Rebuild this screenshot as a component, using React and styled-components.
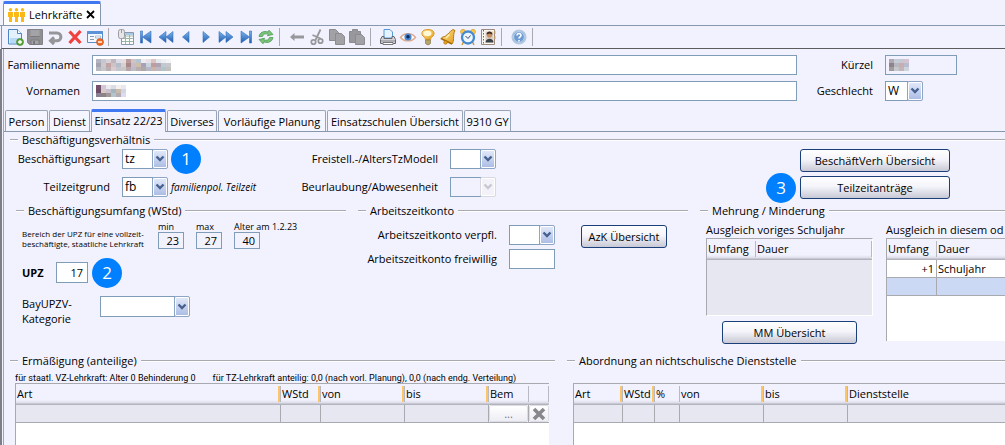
import React, { Fragment } from "react"
import styled, { createGlobalStyle, css } from "styled-components"

const GlobalStyle = createGlobalStyle`
    * {
        box-sizing: border-box;
    }
    body {
        margin: 0;
        background: #f2f2fe;
        color: #000;
        font-family: "Open Sans", "Noto Sans", sans-serif;
        font-size: 11px;
        line-height: 16px;
        overflow: hidden;
    }
    button, input, select {
        font: inherit;
        color: inherit;
        margin: 0;
    }
`

const Window = styled.div`
    display: flex;
    flex-direction: column;
    min-height: 100vh;
`

/* Fensterreiter */
const WindowTabs = styled.div`
    display: flex;
    align-items: flex-end;
    height: 26px;
    padding-left: 3px;
    border-bottom: 1px solid #8798ae;
`

const WindowTab = styled.div`
    display: flex;
    align-items: center;
    gap: 4px;
    height: 24px;
    padding: 0 5px 0 4px;
    background: #fff;
    border: 1px solid #8798ae;
    border-top: 3px solid #3f78f0;
    border-bottom: 0;
    border-radius: 2px 2px 0 0;
`

const CloseButton = styled.button`
    display: flex;
    padding: 0;
    border: 0;
    background: none;
`

/* Werkzeugleiste */
const Toolbar = styled.div`
    display: flex;
    align-items: center;
    height: 23px;
    margin-left: 1px;
    padding-left: 3px;
    border-left: 1px solid #8798ae;
    border-bottom: 1px solid #5c5c60;
`

const ToolButton = styled.button`
    display: flex;
    align-items: center;
    justify-content: center;
    width: 20px;
    height: 20px;
    padding: 0;
    border: 0;
    background: none;
`

const Separator = styled.div`
    width: 1px;
    height: 18px;
    margin: 0 7px 0 3px;
    background: #a9a9b0;
`

const Workspace = styled.main`
    display: flex;
    flex-direction: column;
    flex: 1;
    border-left: 2px solid #7e7e86;
`

const Inner = styled.div`
    display: flex;
    flex-direction: column;
    flex: 1;
    margin-left: 1px;
    border-left: 1px solid #9aa4b8;
`

const HeaderForm = styled.div`
    display: grid;
    grid-template-columns: 76px 1fr 64px 120px;
    column-gap: 12px;
    row-gap: 6px;
    padding-top: 6px;
`

const Label = styled.label`
    display: block;
    line-height: 20px;
    text-align: right;
    white-space: nowrap;
`

const Field = styled.input`
    width: ${p => p.$width || '100%'};
    height: ${p => p.$height || '20px'};
    padding: 0 4px;
    border: 1px solid #7f9db9;
    border-radius: 0;
    background: ${p => p.readOnly ? '#f2f2fe' : '#fff'};
    text-align: ${p => p.$right ? 'right' : 'left'};
    outline: 0;
`

const MaskedWrap = styled.div`
    position: relative;
    height: 20px;
    width: ${p => p.$width || 'auto'};
    svg {
        position: absolute;
        left: 4px;
        top: 4px;
    }
`

const ComboWrap = styled.div`
    position: relative;
    flex: none;
    width: ${p => p.$width || '46px'};
    height: ${p => p.$tall ? '21px' : '20px'};
`

const ComboSelect = styled.select`
    appearance: none;
    display: block;
    width: calc(100% - 15px);
    height: 100%;
    padding: 0 2px;
    border: 1px solid #7f9db9;
    border-radius: 0;
    background: #fff;
    font-size: 12px;
    opacity: 1;
    &:disabled {
        background: #f2f2fe;
    }
`

const Arrow = styled.span`
    position: absolute;
    top: 0;
    right: 0;
    display: flex;
    align-items: center;
    justify-content: center;
    width: 16px;
    height: 100%;
    border: 1px solid ${p => p.$off ? '#d8d8e0' : '#8ea6c6'};
    border-radius: 2px;
    box-shadow: inset 0 0 0 1px #fff;
    background: ${p => p.$off ? '#f2f2f8' : 'linear-gradient(#e4eafa, #a9bbe4)'};
    pointer-events: none;
`

/* Registerkarten */
const TabBar = styled.nav`
    display: flex;
    align-items: flex-end;
    height: 31px;
    padding-left: 1px;
    border-bottom: 1px solid #8798ae;
`

const Tab = styled.button`
    width: ${p => p.$width}px;
    height: 21px;
    margin-right: 1px;
    padding: 2px 0 0;
    border: 1px solid #9aa4b8;
    border-bottom: 0;
    border-radius: 2px 2px 0 0;
    background: #f5f5ff;
    white-space: nowrap;
    ${p => p.$active && css`
        height: 23px;
        margin-bottom: -1px;
        padding: 0 0 2px;
        border-top: 3px solid #3f78f0;
        background: #f2f2fe;
    `}
`

const Group = styled.fieldset`
    min-width: 0;
    margin: 0;
    padding: 0;
    border: 0 solid #a9a9b4;
    border-top-width: 2px;
    border-image: linear-gradient(#a9a9b4 1px, #fff 1px) 2 0 0 0;
`

const Legend = styled.legend`
    height: 15px;
    margin-left: 8px;
    padding: 0 4px;
    line-height: 15px;
`

const TopGroup = styled(Group)`
    margin-left: 6px;
`

const TopRow = styled.div`
    display: flex;
    align-items: flex-start;
    padding-top: 2px;
`

const Pairs = styled.div`
    display: grid;
    grid-template-columns: ${p => p.$label}px auto;
    column-gap: 12px;
    row-gap: ${p => p.$gap || 8}px;
    flex: none;
    width: ${p => p.$width};
`

const Inline = styled.div`
    display: flex;
    align-items: center;
    gap: 3px;
    height: 20px;
`

const Hint = styled.span`
    font-size: 10px;
    font-style: italic;
    white-space: nowrap;
`

const Badge = styled.span`
    display: flex;
    align-items: center;
    justify-content: center;
    flex: none;
    width: 30px;
    height: 30px;
    border-radius: 50%;
    background: #0080ff;
    color: #fff;
    font-size: 17px;
`

const ButtonColumn = styled.div`
    display: flex;
    flex-direction: column;
    align-items: flex-end;
    gap: 4px;
    margin-left: auto;
    padding-right: 55px;
`

const ButtonRow = styled.div`
    display: flex;
    align-items: center;
    gap: 4px;
    height: 23px;
`

const Button = styled.button`
    width: ${p => p.$width};
    height: 23px;
    padding: 0;
    border: 1px solid #1b3f78;
    border-radius: 3px;
    background: linear-gradient(#ffffff, #f4f4fa 45%, #c9c9d6);
    white-space: nowrap;
`

const MiddleRow = styled.div`
    display: grid;
    grid-template-columns: 330px 330px 1fr;
    column-gap: 12px;
    padding: 4px 0 9px 12px;
`

const RangeRow = styled.div`
    display: flex;
    align-items: flex-start;
    padding: 4px 0 0 6px;
`

const RangeText = styled.p`
    width: 136px;
    margin: 0;
    padding-top: 7px;
    font-size: 8px;
    line-height: 10px;
    white-space: nowrap;
`

const RangeItem = styled.label`
    display: block;
    width: 38px;
    font-size: 9px;
    line-height: 10px;
    white-space: nowrap;
    input {
        display: block;
        font-size: 11px;
    }
`

const UpzRow = styled.div`
    display: flex;
    align-items: center;
    gap: 4px;
    height: 21px;
    margin: 13px 0;
    padding-left: 6px;
`

const UpzLabel = styled.label`
    width: 30px;
    font-weight: 700;
`

const CategoryRow = styled.div`
    display: flex;
    align-items: flex-start;
    padding-left: 6px;
`

const CategoryLabel = styled.label`
    width: 78px;
    line-height: 15px;
`

const AccountRow = styled.div`
    display: flex;
    align-items: flex-start;
    justify-content: space-between;
    padding: 7px 21px 0 0;
`

const BalanceRow = styled.div`
    display: flex;
    gap: 13px;
    padding: 4px 0 0 6px;
    overflow: hidden;
`

const Balance = styled.div`
    display: flex;
    flex-direction: column;
    align-items: center;
    flex: none;
    width: ${p => p.$width};
`

const Caption = styled.div`
    align-self: flex-start;
    white-space: nowrap;
`

const TableBox = styled.div`
    width: 100%;
    height: ${p => p.$height || 'auto'};
    margin-bottom: ${p => p.$after || '0'};
    border-left: 1px solid #a9a9b0;
    border-top: 1px solid #a9a9b0;
    border-right: ${p => p.$open ? '0' : '1px solid #fff'};
    border-bottom: ${p => p.$open ? '0' : '1px solid #fff'};
    background: ${p => p.$fill || '#fff'};
    overflow: hidden;
`

const Table = styled.table`
    width: 100%;
    table-layout: fixed;
    border-collapse: separate;
    border-spacing: 0;
`

const Th = styled.th`
    height: 21px;
    padding: 2px 0 3px;
    background: linear-gradient(#f2f2fe 16px, #dcdce8 19px, #b4b4be 20px);
    font-weight: 400;
    text-align: left;
    white-space: nowrap;
`

const HeadText = styled.div`
    height: 16px;
    padding-left: 1px;
    border-right: ${p => p.$line === 'none' ? '0' : '1px solid #b9b9c4'};
    box-shadow: ${p => p.$line === 'orange' ? 'inset -2px 0 0 #fbc568' : 'none'};
    overflow: hidden;
`

const Td = styled.td`
    height: 18px;
    padding: 0 2px 0 1px;
    border-right: 1px solid #a9a9b0;
    border-bottom: 1px solid #a9a9b0;
    background: ${p => p.$fill || '#fff'};
    line-height: 17px;
    text-align: ${p => p.$right ? 'right' : 'left'};
    &:last-child {
        border-right: 0;
    }
`

const CellTd = styled(Td)`
    padding: 0;
`

const CellButton = styled.button`
    display: flex;
    align-items: center;
    justify-content: center;
    width: 100%;
    height: 17px;
    padding: 0;
    border: 1px solid #dcdce4;
    border-radius: 2px;
    background: linear-gradient(#fff, #ededf4);
    color: #6f6f78;
`

const BottomRow = styled.div`
    display: grid;
    grid-template-columns: 545px 1fr;
    column-gap: 12px;
    flex: 1;
    padding-left: 6px;
`

const BottomColumn = styled.div`
    display: flex;
    flex-direction: column;
    min-width: 0;
`

const BottomGroup = styled(Group)`
    flex: none;
`

const Notes = styled.div`
    display: flex;
    gap: 17px;
    height: 15px;
    padding-left: 5px;
    font-family: Roboto, sans-serif;
    font-size: 9px;
    line-height: 20px;
    white-space: nowrap;
`

const BottomTable = styled.div`
    display: flex;
    flex: 1;
    padding: 0 ${p => p.$right}px 0 ${p => p.$left}px;
`

/* Symbole der Werkzeugleiste, Raster 18x18 */
const Icon = ({ size = 18, children }) => (
    <svg width={size} height={size} viewBox="0 0 18 18" fill="none" aria-hidden="true">
        <defs>
            <linearGradient id="blue" x1="0" y1="0" x2="0" y2="1">
                <stop offset="0" stopColor="#7db4ee" />
                <stop offset="1" stopColor="#1f5cae" />
            </linearGradient>
            <linearGradient id="gold" x1="0" y1="0" x2="1" y2="1">
                <stop offset="0" stopColor="#ffe79a" />
                <stop offset="1" stopColor="#e39a12" />
            </linearGradient>
        </defs>
        {children}
    </svg>
)

const tri = (d) => <path d={d} fill="url(#blue)" stroke="#2f6fc0" strokeWidth=".6" />

const icons = {
    neu: <g>
        <path d="M2.5 1.5h9l4 4v10.500h-13z" fill="#e4f1fd" stroke="#4d86c4" />
        <path d="M4 10h10v5H4z" fill="#b9daf6" />
        <path d="M11.500 1.500v4h4" fill="#fff" stroke="#4d86c4" />
        <circle cx="14" cy="14" r="3.500" fill="#5fa83c" stroke="#3b7d22" strokeWidth=".6" />
        <path d="M14 12v4M12 14h4" stroke="#fff" strokeWidth="1.300" />
    </g>,
    speichern: <g>
        <path d="M1.500 1.500h15v15h-13l-2-2z" fill="#8f8f93" stroke="#848488" />
        <path d="M4.500 2h9v6h-9z" fill="#a3a3a7" />
        <path d="M4.500 8.500h9M5 12h8v4.500H5z" stroke="#7a7a7e" fill="#a3a3a7" />
        <path d="M7 13h2v3H7z" fill="#78787c" />
    </g>,
    zurueck: <path d="M3 5h8a3.900 3.900 0 0 1 0 7.800H6M8 9.200 4.500 12.800l3.500 3.400" stroke="#96969a" strokeWidth="3" />,
    loeschen: <path d="m3.500 3.500 11 11.500M14.500 3l-11 12" stroke="#f0413f" strokeWidth="3.200" />,
    formular: <g>
        <path d="M1.500 3.500h15v11h-15z" fill="#f3f8fe" stroke="#5b8dc8" />
        <path d="M1.500 3h15v3h-15z" fill="#5b93d6" />
        <path d="M4 8.500h4M4 11.500h4" stroke="#8a9ab0" />
        <path d="M9.500 8h5v2h-5z" fill="#fff" stroke="#8aa6cc" strokeWidth=".7" />
        <circle cx="14" cy="14" r="3.500" fill="#ee6a22" stroke="#c84d10" strokeWidth=".6" />
        <path d="M12 14h4" stroke="#fff" strokeWidth="1.400" />
    </g>,
    liste: <g>
        <path d="M4.500 4.500h12v12h-12z" fill="#fff" stroke="#8a9aaa" />
        <path d="M8.500 5v11M12.500 5v11M5 8h11M5 10.500h11M5 13.500h11" stroke="#9bb6a6" />
        <path d="M5 5h11v2H5z" fill="#a8c8e8" />
        <rect x="1.500" y="1.500" width="6" height="9" rx="2" fill="#e6e6ea" stroke="#9a9aa0" />
        <path d="M4.500 2v3" stroke="#9a9aa0" />
    </g>,
    erster: <g>{tri("M14 3v12L5.500 9z")}{tri("M3.500 3h2v12h-2z")}</g>,
    schnellZurueck: <g>{tri("M9 3.500v11L2 9z")}{tri("M16 3.500v11L9 9z")}</g>,
    vorheriger: tri("M12 3.500v11L5.500 9z"),
    naechster: tri("M6 3.500v11L12.500 9z"),
    schnellVor: <g>{tri("M2 3.500v11L9 9z")}{tri("M9 3.500v11L16 9z")}</g>,
    letzter: <g>{tri("M4 3v12l8.500-6z")}{tri("M12.500 3h2v12h-2z")}</g>,
    aktualisieren: <g stroke="#419447" strokeWidth=".7" fill="#7bc27b">
        <path d="M2 8.500C2.500 4.500 7 2.500 11 4l1-1.800 4 4.300-5.500 1.300.7-1.600C8.500 5.300 6 6 5.500 8.500z" />
        <path d="M16 9.500c-.5 4-5 6-9 4.500l-1 1.800-4-4.300 5.500-1.300-.7 1.600c2.700.9 5.200.2 5.700-2.300z" />
    </g>,
    pfeil: <path d="m2 9 4.500-4v2.500H16v3H6.500V13z" fill="#98989c" />,
    schere: <g stroke="#98989c" strokeWidth="1.800">
        <path d="M12.500 1.500 7.500 12M4.500 7l8 3.500" />
        <circle cx="5.500" cy="14" r="2.200" /><circle cx="12.500" cy="13" r="2.200" />
    </g>,
    kopieren: <g fill="#a2a2a6" stroke="#8c8c90">
        <path d="M1.500 1.500h6l3 3v8h-9z" /><path d="M7.500 5.500h6l3 3v8h-9z" />
    </g>,
    einfuegen: <g fill="#98989c" stroke="#8c8c90">
        <path d="M1.500 3.500h3v-2h5v2h3v11h-11z" /><path d="M7.500 6.500h6l3 3v7h-9z" fill="#a2a2a6" />
    </g>,
    drucken: <g>
        <path d="M5 1.500h6l2.500 2.500v6H5z" fill="#e6f3ff" stroke="#5599dd" />
        <path d="m3 8.500-1.500 3v4h15v-4l-1.500-3h-2v2H5v-2z" fill="#d2d2d8" stroke="#66666c" />
        <path d="M2 13h14" stroke="#88888e" /><path d="M4 14.500h10v2H4z" fill="#fff" stroke="#77777c" />
    </g>,
    auge: <g>
        <path d="M1.500 9.500C5 4.500 13 4.500 16.500 9.500 13 14 5 14 1.500 9.500z" fill="#fff" stroke="#dca98c" strokeWidth="1.400" />
        <circle cx="9" cy="9" r="3.600" fill="#4a86d0" /><circle cx="9" cy="8.700" r="1.700" fill="#102a58" />
    </g>,
    lampe: <g>
        <path d="M9 1.500c7 0 7.500 5 4 7.500-1 .8-1.300 1.600-1.300 2.500H6.300c0-.9-.3-1.700-1.300-2.500C1.500 6.500 2 1.500 9 1.500z" fill="url(#gold)" stroke="#dc9b2c" />
        <ellipse cx="8.500" cy="5.500" rx="4" ry="2.800" fill="#fff8d6" />
        <path d="M6.500 12h5v3.500l-1.500 1.200H8l-1.500-1.200z" fill="#b5a46c" stroke="#7c7040" strokeWidth=".6" />
    </g>,
    glocke: <g>
        <path d="M16 2.500c-1.500 2.500-1.300 5-1.500 8 0 2-.3 4-1.500 5.500L2 10.500c1-1.700 2.700-1.500 4.500-2.500C9 6.500 10.500 3.500 14 1.500z" fill="url(#gold)" stroke="#b77a10" />
        <path d="M2 10.500 13 16" stroke="#a96f0c" strokeWidth="1.600" />
        <path d="M10.500 6.500 7 10" stroke="#fff0b4" strokeWidth="1.400" />
        <circle cx="6.500" cy="14.500" r="1.800" fill="#e0a020" stroke="#a96f0c" strokeWidth=".6" />
    </g>,
    wecker: <g>
        <circle cx="4" cy="3.800" r="2.500" fill="#f8c74c" stroke="#cf962a" strokeWidth=".6" />
        <circle cx="14" cy="3.800" r="2.500" fill="#f8c74c" stroke="#cf962a" strokeWidth=".6" />
        <path d="m4.500 14-1.500 3M13.500 14l1.500 3" stroke="#cf962a" strokeWidth="1.500" />
        <circle cx="9" cy="9.500" r="6" fill="#edf6ff" stroke="#468ad0" strokeWidth="2.300" />
        <path d="m6.500 8 2.500 2.500 2.500-3" stroke="#3a4a66" />
    </g>,
    adressbuch: <g>
        <path d="M2.500 1.500h13v15h-13z" fill="#faf6f0" stroke="#9c8a7c" />
        <path d="M4.500 2v14" stroke="#c04a3a" strokeDasharray="1.500 1.500" />
        <path d="M6.500 3.500h8v11h-8z" fill="#d8d0c4" />
        <circle cx="10.500" cy="7" r="2.600" fill="#c98c62" /><path d="M7.500 6.500c0-4 6-4 6 0l-3-1z" fill="#402a20" />
        <path d="M6.500 14.500c0-5 8-5 8 0z" fill="#3c4048" />
        <path d="M16 3v3M16 8v3" stroke="#e0a84e" />
    </g>,
    hilfe: <g>
        <circle cx="9" cy="9" r="6.800" fill="#6d9bd3" stroke="#b4c8e2" strokeWidth="1.500" />
        <circle cx="9" cy="9" r="5.400" stroke="#dce8f6" strokeWidth=".8" />
        <path d="M7 7.500c0-2.800 4.200-2.500 4 0-.1 1.300-2 1.400-2 3M9 12v1.500" stroke="#fff" strokeWidth="1.600" />
    </g>,
}

const toolGroups = [
    [['neu', 'Neu'], ['speichern', 'Speichern'], ['zurueck', 'Rückgängig'], ['loeschen', 'Löschen'], ['formular', 'Formular']],
    [['liste', 'Liste'], ['erster', 'Erster'], ['schnellZurueck', 'Schnell zurück'], ['vorheriger', 'Vorheriger'], ['naechster', 'Nächster'], ['schnellVor', 'Schnell vor'], ['letzter', 'Letzter'], ['aktualisieren', 'Aktualisieren']],
    [['pfeil', 'Zurück'], ['schere', 'Ausschneiden'], ['kopieren', 'Kopieren'], ['einfuegen', 'Einfügen']],
    [['drucken', 'Drucken'], ['auge', 'Ansicht'], ['lampe', 'Tipp'], ['glocke', 'Erinnerung'], ['wecker', 'Wecker'], ['adressbuch', 'Adressbuch']],
    [['hilfe', 'Hilfe']],
]

const tabs = [
    ['Person', 43], ['Dienst', 41], ['Einsatz 22/23', 75], ['Diverses', 50],
    ['Vorläufige Planung', 108], ['Einsatzschulen Übersicht', 136], ['9310 GY', 47],
]

const People = () => (
    <svg width="17" height="14" viewBox="0 0 17 14" fill="#fbb917" aria-hidden="true">
        {[0, 6, 12].map(x => (
            <g key={x} transform={`translate(${x} 0)`}>
                <circle cx="2.500" cy="1.700" r="1.700" />
                <path d="M0 4h5v5H4v5H1V9H0z" />
            </g>
        ))}
    </svg>
)

/* unkenntlich gemachte Personendaten */
const Mosaic = ({ rows }) => (
    <svg width={rows[0].length * 5} height={rows.length * 4} aria-hidden="true">
        {rows.map((row, y) => row.map((c, x) => (
            <rect key={`${x}-${y}`} x={x * 5} y={y * 4} width="5" height="4" fill={c} />
        )))}
    </svg>
)

const familyMask = [
    ['#b4b4c0', '#c6c6d2', '#d6d2d8', '#c2b6be', '#dcdce8', '#e6dcdc', '#b89ca0', '#d2c4c4', '#b4c4d0', '#ececf0', '#e8e0e6', '#dcc4c4', '#e4e8ec', '#eeeef2', '#f4f4f6'],
    ['#a4a4b0', '#ccc8cc', '#c2a4a4', '#cfc3c8', '#b6bcc8', '#d6d0ce', '#a88888', '#c8bcc8', '#ccc0aa', '#a8a0b8', '#c8d4dc', '#c09c9c', '#b0a4b4', '#bccad4', '#c8c8cc'],
    ['#b8b8c0', '#c6c6ca', '#bab0b4', '#d8ccd0', '#c4c4cc', '#c8c8c6', '#b8a4a8', '#bcbcc8', '#b8aeb0', '#b0a8a4', '#b4b8c8', '#ccb4ac', '#c0b8c0', '#b0c4cc', '#c4c0bc'],
]
const firstMask = [
    ['#74506c', '#d0c8d4', '#ececf0', '#dcdce4', '#f4f0f0', '#e8e8f0'],
    ['#6c4c64', '#d8c8c8', '#c8c0cc', '#a4b4c0', '#c8bca8', '#d4d4e8'],
    ['#8c8094', '#8c8484', '#a09898', '#b4c4cc', '#b4acb0', '#dcdcf0'],
]
const shortMask = [
    ['#b0a8b0', '#c4ccd8', '#c8c8d4', '#d4c4d0'],
    ['#8c8488', '#b8b8c0', '#c8acb0', '#b8bcd0'],
    ['#a49c9c', '#c4c8cc', '#c4b4b8', '#ccd4dc'],
]

const Combo = ({ id, value = '', width, tall, disabled }) => (
    <ComboWrap $width={width} $tall={tall}>
        <ComboSelect id={id} defaultValue={value} disabled={disabled}>
            <option>{value}</option>
        </ComboSelect>
        <Arrow $off={disabled}>
            <svg width="10" height="8" viewBox="0 0 10 8" fill="none" aria-hidden="true">
                <path d="m1.500 1.500 3.500 3.500 3.500-3.500" stroke={disabled ? '#c8c8d0' : '#47628f'} strokeWidth="2.400" />
            </svg>
        </Arrow>
    </ComboWrap>
)

const Head = ({ cols }) => (
    <Fragment>
        <colgroup>
            {cols.map(([name, width], i) => <col key={i} style={width ? { width } : undefined} />)}
        </colgroup>
        <thead>
            <tr>
                {cols.map(([name, width, line], i) => (
                    <Th key={i}><HeadText $line={line}>{name}</HeadText></Th>
                ))}
            </tr>
        </thead>
    </Fragment>
)

const GREY = '#e7e7f2'
const BLUE = '#ccd9f5'

function App(){
    return (
    <Fragment>
        <GlobalStyle />
        <Window>
            <WindowTabs>
                <WindowTab>
                    <People />
                    <span>Lehrkräfte</span>
                    <CloseButton aria-label="Schließen">
                        <svg width="9" height="9" viewBox="0 0 9 9"><path d="m1 1 7 7M8 1 1 8" stroke="#000" strokeWidth="1.800" /></svg>
                    </CloseButton>
                </WindowTab>
            </WindowTabs>
            <Toolbar>
                {toolGroups.map((group, i) => (
                    <Fragment key={i}>
                        {group.map(([name, title]) => (
                            <ToolButton key={name} aria-label={title}><Icon>{icons[name]}</Icon></ToolButton>
                        ))}
                        <Separator />
                    </Fragment>
                ))}
            </Toolbar>
            <Workspace>
                <Inner>
                    <HeaderForm>
                        <Label htmlFor="familienname">Familienname</Label>
                        <MaskedWrap><Field id="familienname" /><Mosaic rows={familyMask} /></MaskedWrap>
                        <Label htmlFor="kuerzel">Kürzel</Label>
                        <MaskedWrap $width="72px"><Field id="kuerzel" readOnly /><Mosaic rows={shortMask} /></MaskedWrap>
                        <Label htmlFor="vornamen">Vornamen</Label>
                        <MaskedWrap><Field id="vornamen" /><Mosaic rows={firstMask} /></MaskedWrap>
                        <Label htmlFor="geschlecht">Geschlecht</Label>
                        <Combo id="geschlecht" value="W" width="38px" />
                    </HeaderForm>
                    <TabBar>
                        {tabs.map(([name, width]) => (
                            <Tab key={name} $width={width} $active={name === 'Einsatz 22/23'}>{name}</Tab>
                        ))}
                    </TabBar>

                    <TopGroup>
                        <Legend>Beschäftigungsverhältnis</Legend>
                        <TopRow>
                            <Pairs $label={100} $width="288px">
                                <Label htmlFor="art">Beschäftigungsart</Label>
                                <Inline><Combo id="art" value="tz" /><Badge>1</Badge></Inline>
                                <Label htmlFor="grund">Teilzeitgrund</Label>
                                <Inline><Combo id="grund" value="fb" /><Hint>familienpol. Teilzeit</Hint></Inline>
                            </Pairs>
                            <Pairs $label={140} $width="200px">
                                <Label htmlFor="modell">Freistell.-/AltersTzModell</Label>
                                <Combo id="modell" />
                                <Label htmlFor="abwesenheit">Beurlaubung/Abwesenheit</Label>
                                <Combo id="abwesenheit" disabled />
                            </Pairs>
                            <ButtonColumn>
                                <ButtonRow><Button $width="150px">BeschäftVerh Übersicht</Button></ButtonRow>
                                <ButtonRow><Badge>3</Badge><Button $width="150px">Teilzeitanträge</Button></ButtonRow>
                            </ButtonColumn>
                        </TopRow>
                    </TopGroup>

                    <MiddleRow>
                        <Group>
                            <Legend>Beschäftigungsumfang (WStd)</Legend>
                            <RangeRow>
                                <RangeText>Bereich der UPZ für eine vollzeit-<br />beschäftigte, staatliche Lehrkraft</RangeText>
                                <RangeItem>min<Field $width="26px" $height="17px" $right readOnly defaultValue="23" /></RangeItem>
                                <RangeItem>max<Field $width="26px" $height="17px" $right readOnly defaultValue="27" /></RangeItem>
                                <RangeItem>Alter am 1.2.23<Field $width="26px" $height="17px" $right readOnly defaultValue="40" /></RangeItem>
                            </RangeRow>
                            <UpzRow>
                                <UpzLabel htmlFor="upz">UPZ</UpzLabel>
                                <Field id="upz" $width="32px" $height="21px" $right defaultValue="17" />
                                <Badge>2</Badge>
                            </UpzRow>
                            <CategoryRow>
                                <CategoryLabel htmlFor="kategorie">BayUPZV-<br />Kategorie</CategoryLabel>
                                <Combo id="kategorie" width="90px" tall />
                            </CategoryRow>
                        </Group>
                        <Group>
                            <Legend>Arbeitszeitkonto</Legend>
                            <AccountRow>
                                <Pairs $label={139} $gap={4} $width="197px">
                                    <Label htmlFor="verpfl">Arbeitszeitkonto verpfl.</Label>
                                    <Combo id="verpfl" />
                                    <Label htmlFor="freiwillig">Arbeitszeitkonto freiwillig</Label>
                                    <Field id="freiwillig" $width="46px" />
                                </Pairs>
                                <Button $width="86px">AzK Übersicht</Button>
                            </AccountRow>
                        </Group>
                        <Group>
                            <Legend>Mehrung / Minderung</Legend>
                            <BalanceRow>
                                <Balance $width="167px">
                                    <Caption>Ausgleich voriges Schuljahr</Caption>
                                    <TableBox $height="78px" $after="5px" $fill={GREY}>
                                        <Table><Head cols={[['Umfang', 49, 'grey'], ['Dauer', 0, 'grey']]} /></Table>
                                    </TableBox>
                                    <Button $width="135px">MM Übersicht</Button>
                                </Balance>
                                <Balance $width="240px">
                                    <Caption>Ausgleich in diesem od</Caption>
                                    <TableBox $height="103px" $open>
                                        <Table>
                                            <Head cols={[['Umfang', 50, 'grey'], ['Dauer', 0, 'none']]} />
                                            <tbody>
                                                <tr><Td $right>+1</Td><Td>Schuljahr</Td></tr>
                                                <tr><Td $fill={BLUE} /><Td $fill={BLUE} /></tr>
                                            </tbody>
                                        </Table>
                                    </TableBox>
                                </Balance>
                            </BalanceRow>
                        </Group>
                    </MiddleRow>

                    <BottomRow>
                        <BottomColumn>
                            <BottomGroup>
                                <Legend>Ermäßigung (anteilige)</Legend>
                                <Notes>
                                    <span>für staatl. VZ-Lehrkraft: Alter 0 Behinderung 0</span>
                                    <span>für TZ-Lehrkraft anteilig: 0,0 (nach vorl. Planung), 0,0 (nach endg. Verteilung)</span>
                                </Notes>
                            </BottomGroup>
                            <BottomTable $left={5} $right={6}>
                                <TableBox $open>
                                    <Table>
                                        <Head cols={[['Art', 0, 'orange'], ['WStd', 40, 'orange'], ['von', 84, 'orange'], ['bis', 84, 'orange'], ['Bem', 40, 'grey'], ['', 20, 'grey']]} />
                                        <tbody>
                                            <tr>
                                                <Td $fill={GREY} /><Td $fill={GREY} /><Td $fill={GREY} /><Td $fill={GREY} />
                                                <CellTd><CellButton>...</CellButton></CellTd>
                                                <CellTd>
                                                    <CellButton aria-label="Zeile löschen">
                                                        <svg width="14" height="14" viewBox="0 0 14 14"><path d="m2 2 10 10M12 2 2 12" stroke="#87878c" strokeWidth="3.600" /></svg>
                                                    </CellButton>
                                                </CellTd>
                                            </tr>
                                        </tbody>
                                    </Table>
                                </TableBox>
                            </BottomTable>
                        </BottomColumn>
                        <BottomColumn>
                            <BottomGroup>
                                <Legend>Abordnung an nichtschulische Dienststelle</Legend>
                                <Notes />
                            </BottomGroup>
                            <BottomTable $left={6} $right={0}>
                                <TableBox $open>
                                    <Table>
                                        <Head cols={[['Art', 49, 'orange'], ['WStd', 32, 'orange'], ['%', 25, 'grey'], ['von', 84, 'orange'], ['bis', 84, 'orange'], ['Dienststelle', 0, 'none']]} />
                                        <tbody>
                                            <tr>{[0, 1, 2, 3, 4, 5].map(i => <Td key={i} $fill={GREY} />)}</tr>
                                        </tbody>
                                    </Table>
                                </TableBox>
                            </BottomTable>
                        </BottomColumn>
                    </BottomRow>
                </Inner>
            </Workspace>
        </Window>
    </Fragment>
    )
}

export default App
